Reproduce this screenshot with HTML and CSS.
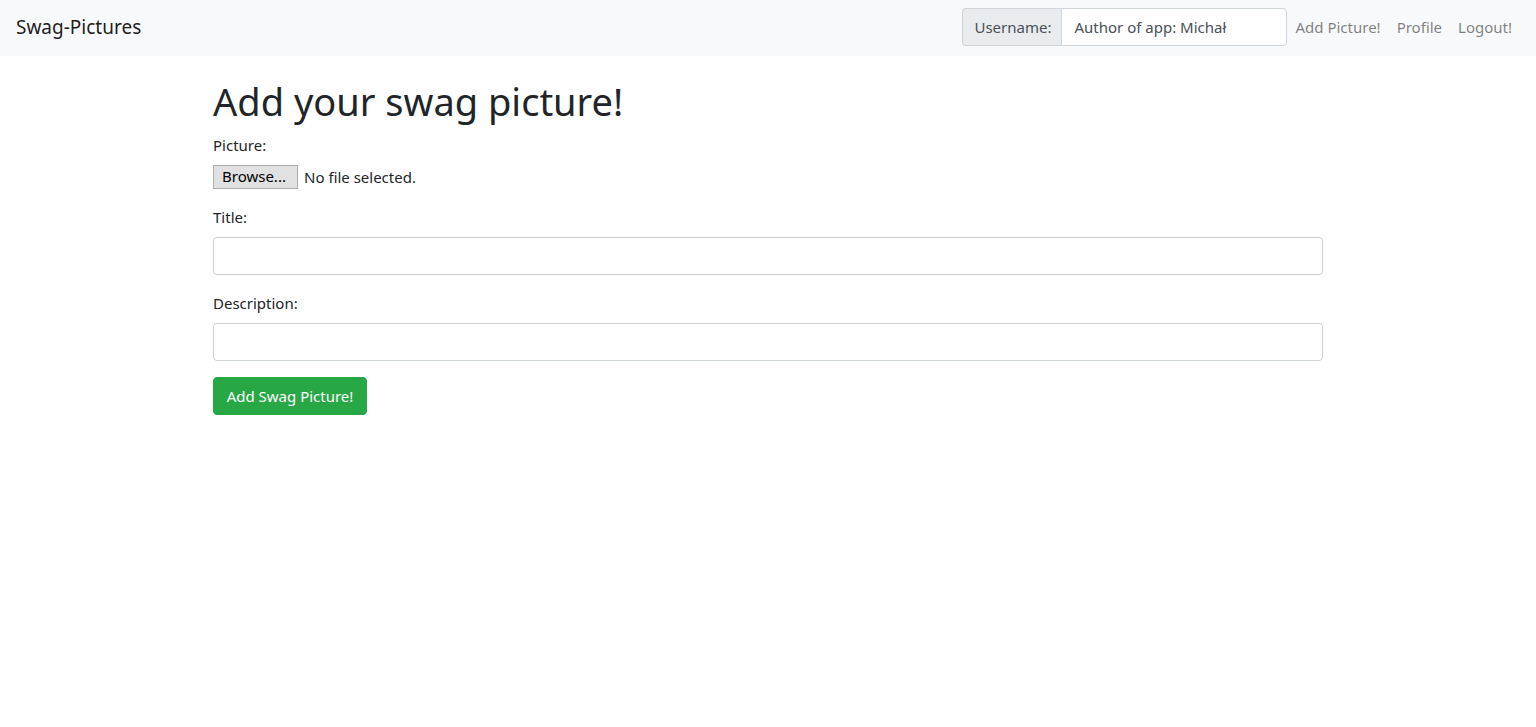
FILE: index.html
```html
<!DOCTYPE html>
<html lang="en">
<head>
<meta charset="utf-8">
<title>Swag-Pictures</title>
<link rel="stylesheet" href="styles.css">
</head>
<body>
<nav class="navbar">
  <a class="brand" href="#">Swag-Pictures</a>
  <div class="nav-right">
    <div class="input-group">
      <span class="prepend">Username:</span>
      <input class="group-input" type="text" value="Author of app: Michał" readonly>
    </div>
    <a class="nav-link" href="#">Add Picture!</a>
    <a class="nav-link" href="#">Profile</a>
    <a class="nav-link" href="#">Logout!</a>
  </div>
</nav>
<main class="container">
  <h1 class="title">Add your swag picture!</h1>
  <form class="form">
    <div class="form-group">
      <label class="label">Picture:</label>
      <div class="file-row">
        <span class="browse">Browse...</span>
        <span class="file-text">No file selected.</span>
      </div>
    </div>
    <div class="form-group">
      <label class="label">Title:</label>
      <input class="form-control" type="text">
    </div>
    <div class="form-group">
      <label class="label">Description:</label>
      <input class="form-control" type="text">
    </div>
    <button class="btn-success" type="button">Add Swag Picture!</button>
  </form>
</main>
</body>
</html>
```
FILE: styles.css
```css
* { box-sizing: border-box; }
html, body { margin: 0; padding: 0; }
body {
  font-family: "Noto Sans", "Open Sans", sans-serif;
  font-size: 16px;
  line-height: 1.5;
  color: #212529;
  background: #fff;
}
.navbar {
  display: flex;
  align-items: center;
  justify-content: space-between;
  height: 56px;
  padding: 7px 16px 9px;
  background: #f8f9fa;
}
.brand {
  font-size: 19px;
  line-height: 30px;
  color: rgba(0,0,0,.9);
  text-decoration: none;
}
.nav-right {
  display: flex;
  align-items: center;
}
.input-group {
  display: flex;
  height: 38px;
}
.prepend {
  display: flex;
  align-items: center;
  padding: 0 11px;
  font-size: 15px;
  color: #495057;
  background: #e9ecef;
  border: 1px solid #ced4da;
  border-right: 0;
  border-radius: 4px 0 0 4px;
  width: 99px;
}
.group-input {
  width: 226px;
  height: 38px;
  padding: 6px 12px;
  font-family: inherit;
  font-size: 15px;
  color: #495057;
  border: 1px solid #ced4da;
  border-radius: 0 4px 4px 0;
  background: #fff;
  outline: none;
}
.nav-link {
  padding: 8px;
  font-size: 15px;
  color: rgba(0,0,0,.5);
  text-decoration: none;
}
.container {
  width: 1110px;
  margin: 0 auto;
  padding-top: 21px;
}
.title {
  margin: 0 0 8px;
  font-size: 38px;
  font-weight: 400;
  line-height: 48px;
}
.form-group { margin-bottom: 16px; }
.label {
  display: block;
  margin-bottom: 8px;
  font-size: 15px;
  line-height: 24px;
}
.file-row {
  display: flex;
  align-items: center;
  height: 24px;
}
.browse {
  display: inline-block;
  height: 24px;
  width: 85px;
  line-height: 21px;
  padding: 0 8px;
  font-family: "Noto Sans", sans-serif;
  font-size: 15px;
  color: #000;
  background: #e1e1e1;
  border: 1px solid #adadad;
  margin-right: 6px;
}
.file-text { font-size: 15px; line-height: 24px; }
.form-control {
  display: block;
  width: 100%;
  height: 38px;
  padding: 6px 12px;
  font-family: inherit;
  font-size: 16px;
  border: 1px solid #ced4da;
  border-radius: 4px;
  background: #fff;
}
.btn-success {
  height: 38px;
  padding: 6px 12px;
  font-family: inherit;
  font-size: 15px;
  line-height: 24px;
  color: #fff;
  background: #28a745;
  border: 1px solid #28a745;
  border-radius: 4px;
  width: 154px;
}
```
